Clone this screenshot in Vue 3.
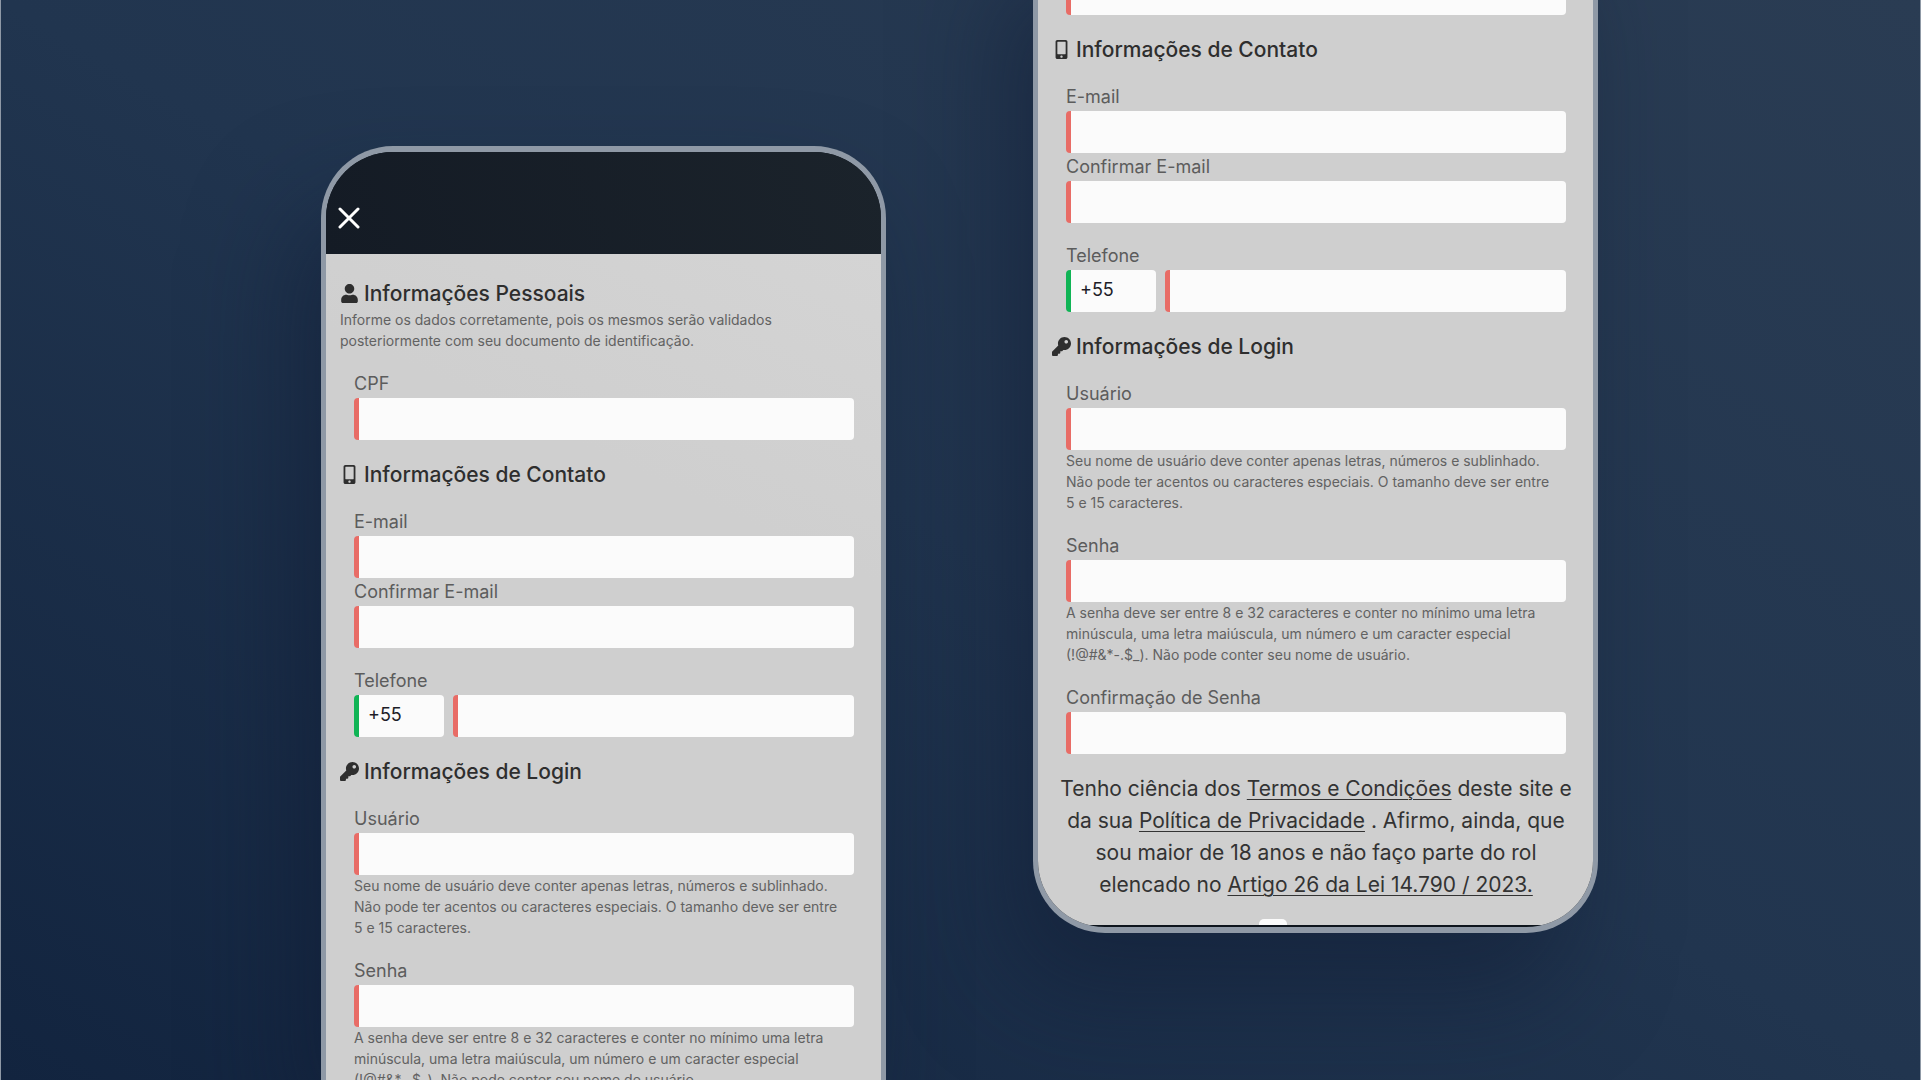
<script setup>
import { h } from 'vue'

const icons = {
  user: {
    box: '0 0 448 512',
    d: 'M224 256c70.7 0 128-57.3 128-128S294.7 0 224 0 96 57.3 96 128s57.3 128 128 128zm89.6 32h-16.7c-22.2 10.2-46.9 16-72.9 16s-50.6-5.8-72.9-16h-16.7C60.2 288 0 348.2 0 422.4V464c0 26.5 21.5 48 48 48h352c26.5 0 48-21.5 48-48v-41.6c0-74.2-60.2-134.4-134.4-134.4z'
  },
  mobile: {
    box: '0 0 320 512',
    d: 'M272 0H48C21.5 0 0 21.5 0 48v416c0 26.5 21.5 48 48 48h224c26.5 0 48-21.5 48-48V48c0-26.5-21.5-48-48-48zM160 480c-17.7 0-32-14.3-32-32s14.3-32 32-32 32 14.3 32 32-14.3 32-32 32zm112-108c0 6.6-5.4 12-12 12H60c-6.6 0-12-5.4-12-12V60c0-6.6 5.4-12 12-12h200c6.6 0 12 5.4 12 12v312z'
  },
  key: {
    box: '0 0 512 512',
    d: 'M512 176.001C512 273.203 433.202 352 336 352c-11.22 0-22.19-1.062-32.827-3.069l-24.012 27.014A23.999 23.999 0 0 1 261.223 384H224v40c0 13.255-10.745 24-24 24h-40v40c0 13.255-10.745 24-24 24H24c-13.255 0-24-10.745-24-24v-78.059c0-6.365 2.529-12.47 7.029-16.971l161.802-161.802C163.108 213.814 160 195.271 160 176 160 78.798 238.797.001 335.999 0 433.488-.001 512 78.511 512 176.001zM336 128c0 26.51 21.49 48 48 48s48-21.49 48-48-21.49-48-48-48-48 21.49-48 48z'
  }
}

const SectionIcon = (props) =>
  h('svg', { viewBox: icons[props.name].box, 'aria-hidden': 'true' }, [
    h('path', { d: icons[props.name].d, fill: 'currentColor' })
  ])
SectionIcon.props = ['name']

const cpf = { id: 'cpf', label: 'CPF' }
const contact = {
  icon: 'mobile',
  title: 'Informações de Contato',
  fields: [
    { id: 'email', label: 'E-mail', type: 'email', tight: true },
    { id: 'email2', label: 'Confirmar E-mail', type: 'email' },
    { id: 'phone', label: 'Telefone', type: 'tel', prefix: '+55' }
  ]
}
const user = {
  id: 'user',
  label: 'Usuário',
  hint: 'Seu nome de usuário deve conter apenas letras, números e sublinhado. Não pode ter acentos ou caracteres especiais. O tamanho deve ser entre 5 e 15 caracteres.'
}
const password = {
  id: 'password',
  label: 'Senha',
  type: 'password',
  hint: 'A senha deve ser entre 8 e 32 caracteres e conter no mínimo uma letra minúscula, uma letra maiúscula, um número e um caracter especial (!@#&*-.$_). Não pode conter seu nome de usuário.'
}
const confirmation = { id: 'password2', label: 'Confirmação de Senha', type: 'password' }
const login = { icon: 'key', title: 'Informações de Login' }

const phones = [
  {
    key: 'start',
    sections: [
      {
        icon: 'user',
        title: 'Informações Pessoais',
        intro: 'Informe os dados corretamente, pois os mesmos serão validados posteriormente com seu documento de identificação.',
        fields: [cpf]
      },
      contact,
      { ...login, fields: [user, password] }
    ]
  },
  {
    key: 'end',
    sections: [
      { fields: [cpf] },
      contact,
      { ...login, fields: [user, password, confirmation] }
    ]
  }
]
</script>

<template>
  <main class="stage">
    <div v-for="phone in phones" :key="phone.key" class="column" :class="phone.key">
      <div class="phone">
        <header v-if="phone.key === 'start'" class="topbar">
          <button type="button" class="close" aria-label="Fechar">
            <svg viewBox="0 0 22 22" aria-hidden="true">
              <path d="M2 2 20 20M20 2 2 20" fill="none" stroke="currentColor" stroke-width="3" stroke-linecap="round" />
            </svg>
          </button>
        </header>
        <form class="form">
          <section v-for="(section, i) in phone.sections" :key="i" class="section">
            <h2 v-if="section.title" class="title">
              <SectionIcon class="icon" :name="section.icon" />{{ section.title }}
            </h2>
            <p v-if="section.intro" class="hint intro">{{ section.intro }}</p>
            <div class="fields">
              <div v-for="field in section.fields" :key="field.id" class="field" :class="{ tight: field.tight }">
                <label class="label" :for="`${phone.key}-${field.id}`">{{ field.label }}</label>
                <div class="row">
                  <input v-if="field.prefix" class="input prefix" type="text" :value="field.prefix" aria-label="Código do país" />
                  <input :id="`${phone.key}-${field.id}`" class="input" :type="field.type || 'text'" />
                </div>
                <p v-if="field.hint" class="hint">{{ field.hint }}</p>
              </div>
            </div>
          </section>
          <template v-if="phone.key === 'end'">
            <p class="terms">
              Tenho ciência dos <a href="#">Termos e Condições</a> deste site e da sua
              <a href="#">Política de Privacidade</a> . Afirmo, ainda, que sou maior de 18 anos e não faço parte do rol
              elencado no <a href="#">Artigo 26 da Lei 14.790 / 2023.</a>
            </p>
            <div class="accept">
              <input type="checkbox" class="check" aria-label="Aceito os termos" />
            </div>
          </template>
        </form>
      </div>
    </div>
  </main>
</template>

<style>
body {
  margin: 0;
  background: #1c2f4b;
}
</style>

<style scoped>
.stage {
  box-sizing: border-box;
  display: flex;
  justify-content: center;
  gap: 147px;
  height: 100vh;
  padding-right: 2px;
  border: solid #8f99a6;
  border-width: 0 1px;
  overflow: hidden;
  font-family: Inter, "Liberation Sans", sans-serif;
  background: linear-gradient(to bottom left, #2a3c53, #21354f 50%, #12243f);
}
.column {
  flex: 0 1 565px;
  min-width: 0;
  box-sizing: border-box;
  display: flex;
  flex-direction: column;
  height: 100%;
}
.start {
  padding-top: 146px;
}
.end {
  justify-content: flex-end;
  padding-bottom: 147px;
}
.phone {
  flex: none;
  overflow: hidden;
  border: solid #8f99a6;
  background: #0d141c;
  box-shadow: -30px 60px 100px #0f1c3380;
}
.start .phone {
  flex: 1 0 0;
  border-width: 6px 5px 0;
  border-radius: 72px 72px 0 0;
}
.end .phone {
  border-width: 0 5px 6px;
  border-radius: 0 0 72px 72px;
  padding-bottom: 2px;
}
.topbar {
  display: flex;
  align-items: flex-end;
  box-sizing: border-box;
  height: 102px;
  padding: 0 12px 25px;
  background: linear-gradient(70deg, #141b25, #1b232b);
}
.close {
  width: 22px;
  height: 22px;
  padding: 0;
  border: 0;
  background: none;
  color: #fff;
}
.close svg {
  display: block;
}
.form {
  padding: 0 13px 0 14px;
  background: #cfcfcf;
}
.start .form {
  padding-top: 5px;
  background: linear-gradient(205deg, #d4d4d4, #cfcfcf 300px);
}
.title {
  display: flex;
  align-items: center;
  gap: 5px;
  margin: 0;
  padding-top: 20px;
  font-size: 21px;
  line-height: 30px;
  font-weight: 500;
  color: #2e2e2e;
}
.icon {
  width: 19px;
  height: 19px;
  margin-bottom: 2px;
}
.hint {
  margin: 0;
  padding-right: 8px;
  font-size: 14px;
  line-height: 21px;
  color: #626262;
}
.intro {
  padding-bottom: 1px;
}
.fields {
  display: flex;
  flex-direction: column;
  gap: 19px;
  padding: 18px 14px 0;
}
.field.tight {
  margin-bottom: -19px;
}
.label {
  display: block;
  font-size: 18px;
  line-height: 28px;
  color: #5c5c5c;
}
.row {
  display: flex;
  gap: 9px;
}
.input {
  flex: 1;
  min-width: 0;
  box-sizing: border-box;
  height: 42px;
  padding: 0 9px 4px;
  border: 0;
  border-left: 5px solid #e86c66;
  border-radius: 4px;
  background: #fbfbfb;
  font: inherit;
  font-size: 18px;
  color: #1d1d28;
}
.input.prefix {
  flex: 0 0 90px;
  border-left-color: #10b455;
}
.terms {
  margin: 0;
  padding: 19px 4px 18px;
  font-size: 21px;
  line-height: 32px;
  text-align: center;
  color: #333;
}
.terms a {
  color: inherit;
  text-decoration-thickness: 1px;
  text-underline-offset: 3px;
}
.accept {
  display: flex;
  height: 6px;
  padding-left: 207px;
  overflow: hidden;
}
.check {
  flex: none;
  appearance: none;
  width: 28px;
  height: 28px;
  margin: 0;
  border-radius: 5px;
  background: #fbfbfb;
}
</style>
